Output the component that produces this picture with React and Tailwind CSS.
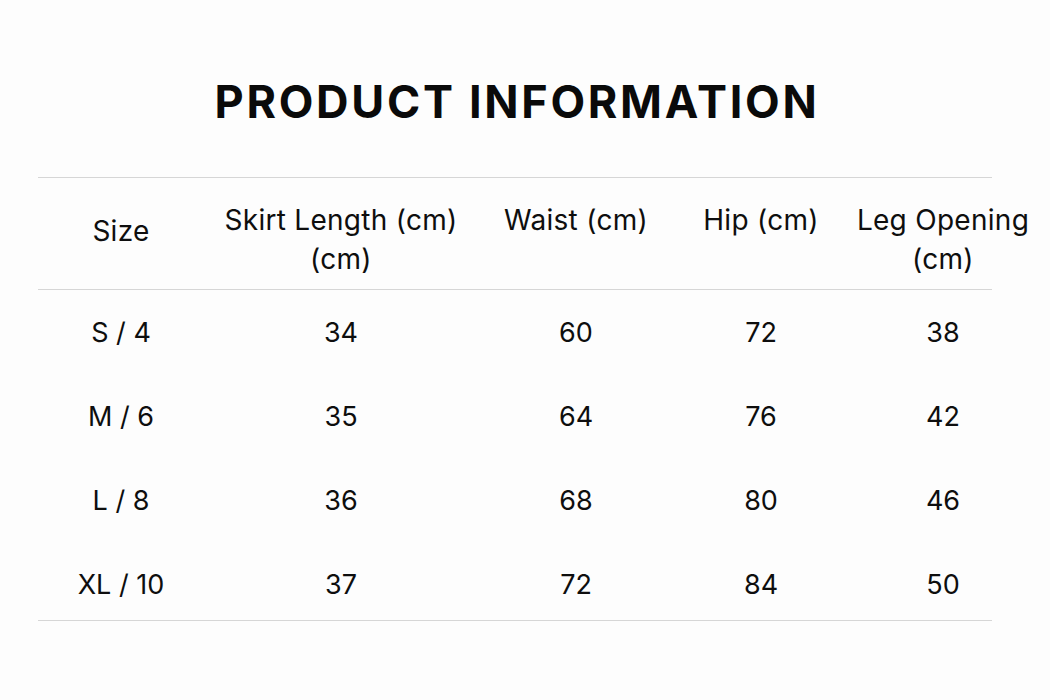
import React from 'react';

const ROWS = [
    ['S / 4', '34', '60', '72', '38'],
    ['M / 6', '35', '64', '76', '42'],
    ['L / 8', '36', '68', '80', '46'],
    ['XL / 10', '37', '72', '84', '50'],
];

const COLS = 'grid w-[1000px] grid-cols-[166px_274px_196px_174px_190px]';

export default function App() {
    return (
        <div
            className="w-[1050px] h-[700px] bg-[#fdfdfd] text-[#0e0e0e] overflow-hidden"
            style={{ fontFamily: 'Inter, "Liberation Sans", sans-serif' }}
        >
            <h1 className="pt-[78px] pr-[16px] h-[177px] text-center text-[45px] leading-[48px] font-bold tracking-[0.06em] text-[#0a0a0a]">
                PRODUCT INFORMATION
            </h1>

            <div className="ml-[38px] w-[954px]">
                {/* Header */}
                <div className="border-t border-b border-[#d6d6d6] h-[113px]">
                    <div className={`${COLS} text-[28px] leading-[39px] tracking-[0.01em] text-center pt-[23px]`}>
                        <div className="pt-[11px]">Size</div>
                        <div>Skirt Length (cm)<br />(cm)</div>
                        <div>Waist (cm)</div>
                        <div>Hip (cm)</div>
                        <div>Leg Opening<br />(cm)</div>
                    </div>
                </div>

                {/* Rows */}
                <div className="h-[331px] pt-[1px] border-b border-[#d6d6d6]">
                    {ROWS.map((row) => (
                        <div key={row[0]} className={`${COLS} h-[84px] items-center text-center text-[27px]`}>
                            {row.map((cell, i) => (
                                <div key={i}>{cell}</div>
                            ))}
                        </div>
                    ))}
                </div>
            </div>
        </div>
    );
}
